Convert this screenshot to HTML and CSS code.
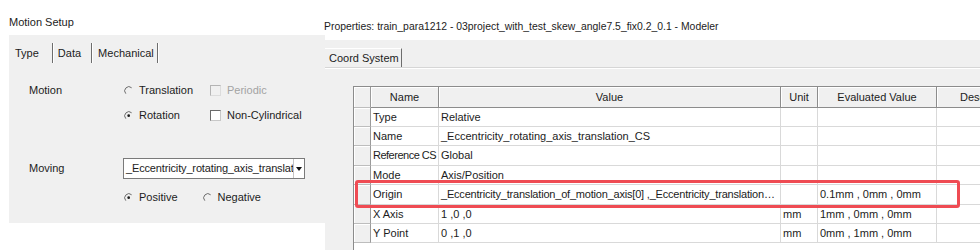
FILE: index.html
```html
<!DOCTYPE html>
<html lang="en">
<head>
    <meta charset="UTF-8">
    <meta name="viewport" content="width=device-width, initial-scale=1.0">
    <link rel="stylesheet" href="styles.css">
    <title>Motion Setup / Properties</title>
</head>
<body>
    <div class="page">
        <section class="motion">
            <div class="motion-title">Motion Setup</div>
            <div class="motion-body">
                <div class="tabs">
                    <span class="tab tab-type">Type</span>
                    <span class="tab tab-data">Data</span>
                    <span class="tab tab-mech">Mechanical</span>
                </div>
                <div class="form">
                    <div class="label">Motion</div>
                    <div class="opt">
                        <svg class="radio" viewBox="0 0 10 10"><path d="M2 8.5 A4.6 4.6 0 0 1 8.5 2" /></svg>
                        Translation
                    </div>
                    <div class="opt disabled"><span class="check"></span>Periodic</div>

                    <div></div>
                    <div class="opt">
                        <svg class="radio" viewBox="0 0 10 10"><path d="M2 8.5 A4.6 4.6 0 0 1 8.5 2" /><circle cx="5.2" cy="5.2" r="1.5" /></svg>
                        Rotation
                    </div>
                    <div class="opt"><span class="check"></span>Non-Cylindrical</div>

                    <div class="label moving">Moving</div>
                    <div class="select">
                        <span class="select-text">_Eccentricity_rotating_axis_translat</span>
                        <span class="select-btn"><span class="arrow"></span></span>
                    </div>

                    <div></div>
                    <div class="direction">
                        <div class="opt">
                            <svg class="radio" viewBox="0 0 10 10"><path d="M2 8.5 A4.6 4.6 0 0 1 8.5 2" /><circle cx="5.2" cy="5.2" r="1.5" /></svg>
                            Positive
                        </div>
                        <div class="opt">
                            <svg class="radio" viewBox="0 0 10 10"><path d="M2 8.5 A4.6 4.6 0 0 1 8.5 2" /></svg>
                            Negative
                        </div>
                    </div>
                </div>
            </div>
        </section>

        <section class="props">
            <div class="props-title">Properties: train_para1212 - 03project_with_test_skew_angle7.5_fix0.2_0.1 - Modeler</div>
            <div class="props-body">
                <div class="ptabs">
                    <span class="ptab">Coord System</span>
                </div>
                <div class="grid">
                    <div class="hd sel"></div>
                    <div class="hd">Name</div>
                    <div class="hd">Value</div>
                    <div class="hd">Unit</div>
                    <div class="hd">Evaluated Value</div>
                    <div class="hd hd-desc">Desc</div>

                    <div class="sel"></div><div class="cell">Type</div><div class="cell">Relative</div><div class="cell"></div><div class="cell"></div><div class="cell"></div>
                    <div class="sel"></div><div class="cell">Name</div><div class="cell">_Eccentricity_rotating_axis_translation_CS</div><div class="cell"></div><div class="cell"></div><div class="cell"></div>
                    <div class="sel"></div><div class="cell tight">Reference CS</div><div class="cell">Global</div><div class="cell"></div><div class="cell"></div><div class="cell"></div>
                    <div class="sel"></div><div class="cell">Mode</div><div class="cell">Axis/Position</div><div class="cell"></div><div class="cell"></div><div class="cell"></div>
                    <div class="sel"></div><div class="cell">Origin</div><div class="cell ellipsis">_Eccentricity_translation_of_motion_axis[0] ,_Eccentricity_translation_of_motion_axis[1]</div><div class="cell"></div><div class="cell">0.1mm , 0mm , 0mm</div><div class="cell"></div>
                    <div class="sel"></div><div class="cell">X Axis</div><div class="cell">1 ,0 ,0</div><div class="cell">mm</div><div class="cell">1mm , 0mm , 0mm</div><div class="cell"></div>
                    <div class="sel"></div><div class="cell">Y Point</div><div class="cell">0 ,1 ,0</div><div class="cell">mm</div><div class="cell">0mm , 1mm , 0mm</div><div class="cell"></div>

                    <div class="highlight"></div>
                </div>
            </div>
        </section>
    </div>
</body>
</html>
```

FILE: styles.css
```css
body {
    margin: 0;
    padding: 0;
    background-color: #fff;
    font-family: 'Liberation Sans', Arial, sans-serif;
    font-size: 11px;
    color: #1c1c1c;
}

.page {
    display: flex;
    width: 980px;
    height: 250px;
    overflow: hidden;
}

/* left dialog */
.motion {
    width: 325px;
    flex: none;
}

.motion-title {
    height: 35px;
    box-sizing: border-box;
    padding: 14px 0 0 9px;
    line-height: 16px;
}

.motion-body {
    margin-left: 9px;
    height: 188px;
    background-color: #f0f0f0;
    overflow: hidden;
}

.tabs {
    display: flex;
    margin-top: 8px;
    height: 20px;
    line-height: 20px;
}

.tab {
    border-right: 1px solid #6d6d6d;
    box-shadow: 1px 0 0 #fff;
}

.tab-type {
    padding: 0 13px 0 6px;
}

.tab-data {
    padding: 0 10px 0 5px;
}

.tab-mech {
    padding: 0 3px 0 6px;
}

.form {
    display: grid;
    grid-template-columns: 94px 87px 1fr;
    grid-template-rows: 25px 53px 29px 20px;
    align-items: start;
    margin-top: 17px;
    padding-left: 20px;
}

.label {
    line-height: 20px;
}

.label.moving {
    line-height: 21px;
}

.opt {
    display: flex;
    align-items: center;
    height: 20px;
}

.opt.disabled {
    color: #a3a3a3;
}

.radio {
    width: 9px;
    height: 9px;
    margin: 0 6px 0 1px;
    fill: #1a1a1a;
}

.radio path {
    fill: none;
    stroke: #6a6a6a;
    stroke-width: 1.1;
}

.check {
    width: 9px;
    height: 9px;
    margin-right: 6px;
    background-color: #fff;
    border-top: 1px solid #6a6a6a;
    border-left: 1px solid #6a6a6a;
    border-right: 1px solid #c8c8c8;
    border-bottom: 1px solid #c8c8c8;
}

.disabled .check {
    background-color: #f0f0f0;
    border-color: #b4b4b4 #dcdcdc #dcdcdc #b4b4b4;
}

.select {
    grid-column: 2 / 4;
    display: flex;
    width: 182px;
    height: 21px;
    box-sizing: border-box;
    border: 1px solid #7a7a7a;
    background-color: #fff;
}

.select-text {
    flex: 1;
    overflow: hidden;
    white-space: nowrap;
    padding-left: 2px;
    line-height: 19px;
    letter-spacing: -0.15px;
}

.select-btn {
    width: 10px;
    border-left: 1px solid #c4c4c4;
    display: flex;
    align-items: center;
    justify-content: center;
}

.arrow {
    width: 0;
    height: 0;
    border-left: 3px solid transparent;
    border-right: 3px solid transparent;
    border-top: 4px solid #111;
}

.direction {
    grid-column: 2 / 4;
    display: flex;
    gap: 24px;
}

/* right properties window */
.props {
    flex: 1;
    display: flex;
    flex-direction: column;
}

.props-title {
    height: 40px;
    box-sizing: border-box;
    padding: 19px 0 0 0;
    margin-left: -1px;
    font-size: 10.4px;
    line-height: 16px;
    white-space: nowrap;
}

.props-body {
    flex: 1;
    position: relative;
    background-color: #f0f0f0;
    overflow: hidden;
    padding-top: 8px;
}

.ptabs {
    height: 19px;
    border-bottom: 1px solid #d6d6d6;
    box-shadow: 0 1px 0 #fff;
}

.ptab {
    display: inline-block;
    height: 19px;
    width: 77px;
    box-sizing: border-box;
    padding-left: 4px;
    line-height: 19px;
    border-right: 1px solid #6d6d6d;
    border-top: 1px solid #fff;
    background-color: #f0f0f0;
}

.grid {
    position: relative;
    display: grid;
    grid-template-columns: 17px 68px 342px 37px 119px 104px;
    grid-template-rows: 21px 19px 19px 20px 19px 20px 19px 19px;
    align-content: start;
    margin: 18px 0 0 28px;
    height: 200px;
    width: 700px;
    border-top: 1px solid #8c8c8c;
    border-left: 1px solid #8c8c8c;
    background-color: #fff;
}

.grid > div {
    box-sizing: border-box;
    white-space: nowrap;
    overflow: hidden;
}

.hd {
    background-color: #f0f0f0;
    border-right: 1px solid #8c8c8c;
    border-bottom: 1px solid #8c8c8c;
    box-shadow: inset 1px 1px 0 #fff;
    text-align: center;
    line-height: 20px;
}

.grid > .hd-desc {
    text-align: left;
    padding-left: 23px;
    overflow: visible;
}

.sel {
    background-color: #f0f0f0;
    border-right: 1px solid #9a9a9a;
    border-bottom: 1px solid #bdbdbd;
    box-shadow: inset 1px 1px 0 #fff;
}

.cell {
    border-right: 1px solid #d9d9d9;
    border-bottom: 1px solid #d9d9d9;
    padding-left: 2px;
    line-height: 18px;
}

.cell.tight {
    letter-spacing: -0.5px;
}

.cell.ellipsis {
    text-overflow: ellipsis;
    padding-right: 2px;
    letter-spacing: -0.2px;
}

.grid > .highlight {
    position: absolute;
    left: 1px;
    top: 93px;
    width: 605px;
    height: 28px;
    box-sizing: border-box;
    border: 3px solid #ef4b53;
    border-radius: 3px;
    overflow: visible;
}
```
